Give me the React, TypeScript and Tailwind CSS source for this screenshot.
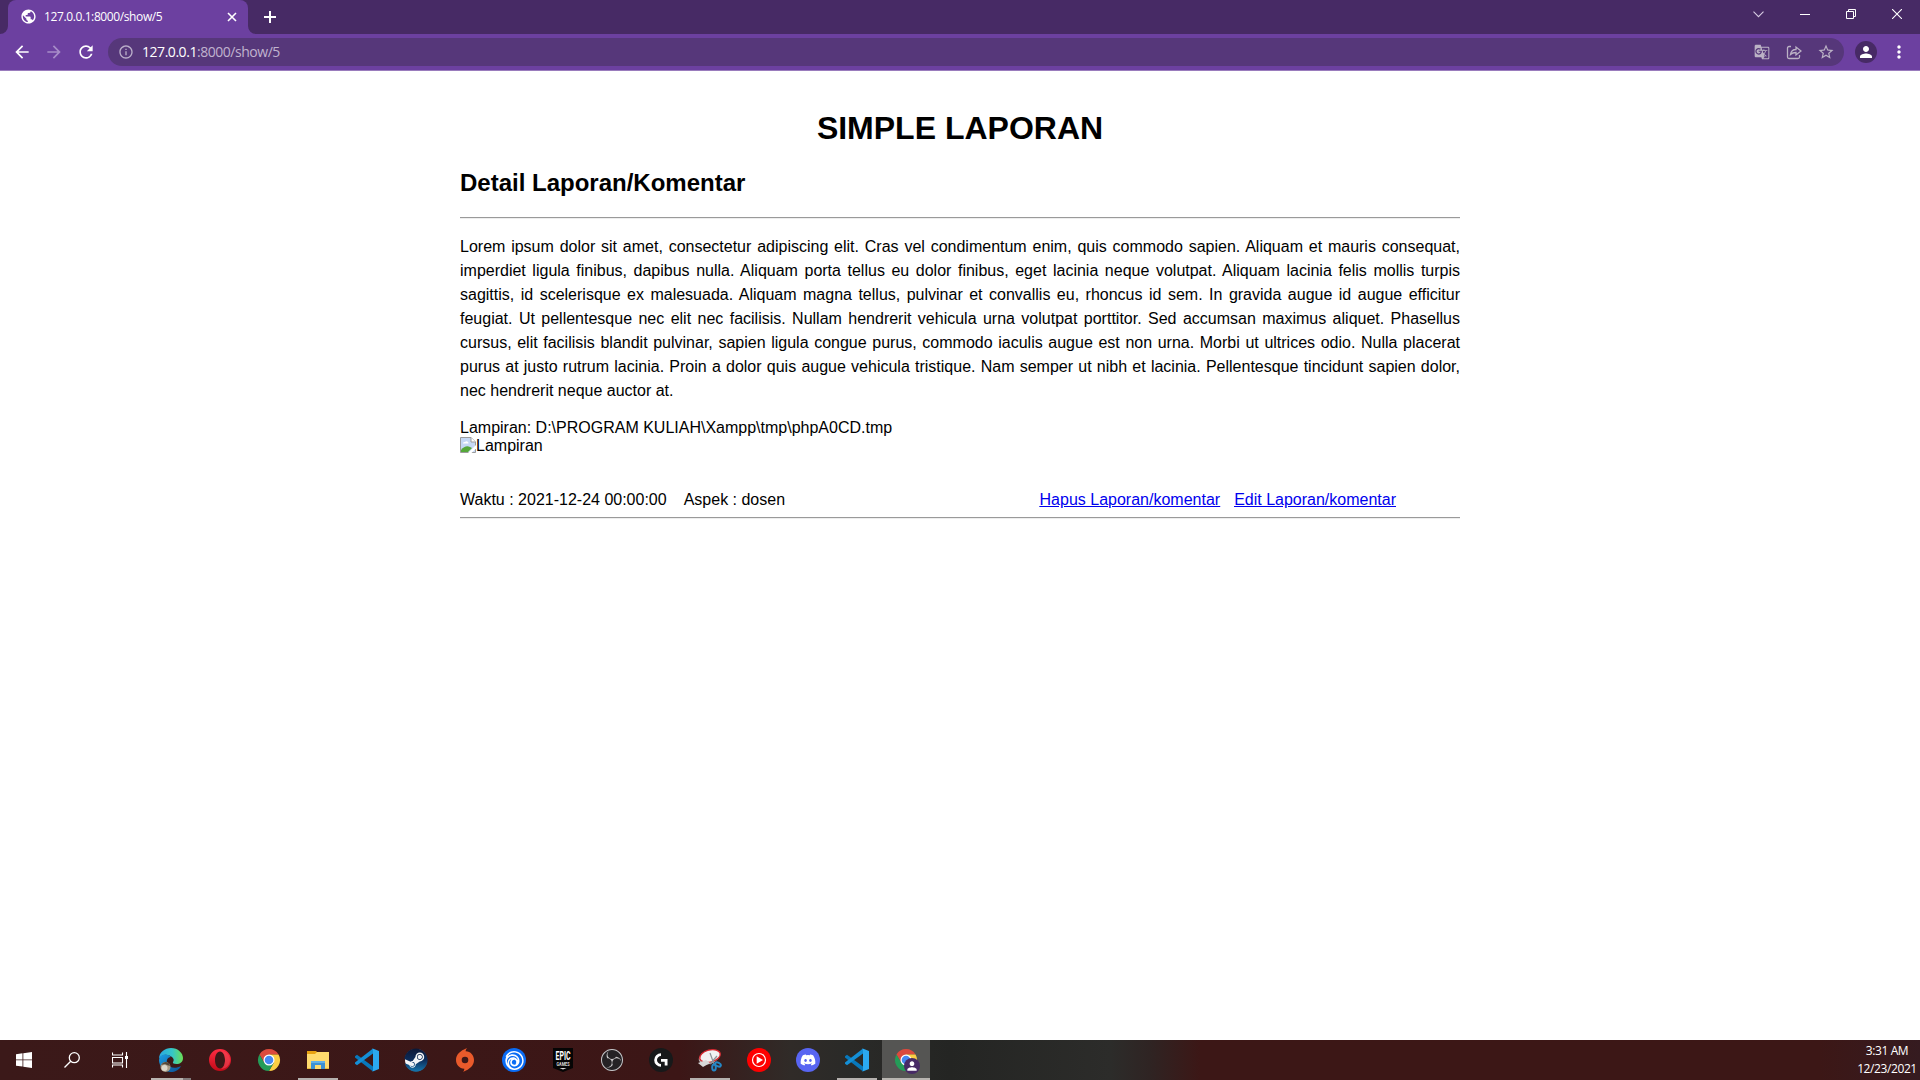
import React from "react";
import { MdArrowBack, MdArrowForward, MdRefresh, MdInfoOutline, MdStarBorder, MdPerson, MdMoreVert, MdPublic, MdGTranslate } from "react-icons/md";
import { FaDiscord, FaSteam } from "react-icons/fa";
import { SiUbisoft, SiObsstudio } from "react-icons/si";

function TabStrip() {
  return (
    <div className="flex h-[34px] bg-[#472a65] pl-2 text-white">
      <div className="relative flex h-[34px] w-[240px] items-center rounded-t-lg bg-[#6c40a0] pl-3 pr-[11px] pb-px">
        <svg className="absolute -left-2 bottom-0" width="8" height="8"><path d="M8 0v8H0a8 8 0 0 0 8-8z" fill="#6c40a0" /></svg>
        <svg className="absolute -right-2 bottom-0" width="8" height="8"><path d="M0 0v8h8a8 8 0 0 1-8-8z" fill="#6c40a0" /></svg>
        <MdPublic className="size-[17px] shrink-0" />
        <span className="ml-[7px] grow whitespace-nowrap text-[12px] leading-4 tracking-[-0.39px]">127.0.0.1:8000/show/5</span>
        <svg width="10" height="10" viewBox="0 0 10 10" stroke="#fff" strokeWidth="1.6"><path d="M1 1l8 8M9 1l-8 8" /></svg>
      </div>
      <svg className="ml-4 mt-[11px]" width="12" height="12" stroke="#fff" strokeWidth="2"><path d="M6 0v12M0 6h12" /></svg>
      <div className="ml-auto flex h-7 *:flex *:w-[46px] *:items-center *:justify-center">
        <div className="pr-px"><svg width="11" height="7" fill="none" stroke="#d6cbe2" strokeWidth="1.1"><path d="M.5.7l5 5 5-5" /></svg></div>
        <div className="pt-px"><svg width="10" height="1"><path d="M0 0h10v1H0z" fill="#fff" /></svg></div>
        <div><svg width="10" height="10" fill="none" stroke="#fff"><path d="M.5 2.5h7v7h-7zM2.5 2.5v-2h7v7h-2" /></svg></div>
        <div><svg width="10" height="10" stroke="#fff" strokeWidth="1.1"><path d="M0 0l10 10M10 0L0 10" /></svg></div>
      </div>
    </div>
  );
}

function Toolbar() {
  return (
    <div className="flex h-[37px] items-center border-b border-[#9a7cbd] bg-[#6c40a0] text-white">
      <div className="flex w-[108px] shrink-0 items-center gap-3 pl-3">
        <MdArrowBack className="size-5" />
        <MdArrowForward className="size-5 text-[#a78cc8]" />
        <MdRefresh className="size-5" />
      </div>
      <div className="flex h-7 grow items-center rounded-full bg-[#56377a] pl-[10px] pr-[10px]">
        <MdInfoOutline className="size-4 text-[#bbafca]" />
        <span className="ml-2 text-[14px] leading-5 tracking-[-0.46px] text-[#c0b3cf]"><span className="text-white">127.0.0.1</span>:8000/show/5</span>
        <div className="ml-auto flex items-center gap-4 text-[#bbb2c5]">
          <MdGTranslate className="size-4" />
          <svg width="16" height="16" viewBox="0 0 16 16" fill="none" stroke="currentColor" strokeWidth="1.3"><path d="M5 2.5H3a1.5 1.5 0 0 0-1.5 1.5v9A1.500 1.500 0 0 0 3 14.500h9a1.500 1.500 0 0 0 1.500-1.500v-2" /><path d="M4.500 10.500c.5-3.500 2.500-5 5.500-5V3l5 4-5 4V8.500c-2.500 0-4 .5-5.500 2z" /></svg>
          <MdStarBorder className="size-[18px] -mx-px" />
        </div>
      </div>
      <div className="ml-[11px] flex size-[22px] items-center justify-center rounded-full bg-[#472a65]"><MdPerson className="size-[18px]" /></div>
      <MdMoreVert className="ml-3 mr-[11px] size-5" />
    </div>
  );
}

function BrokenImage() {
  return (
    <svg width="16" height="16" viewBox="0 0 16 16">
      <path d="M.5.500h10.500l4.500 4.500v10.500H.500z" fill="#c5d8f5" stroke="#9b9b9b" />
      <path d="M11 .500V5h4.500" fill="#fff" stroke="#9b9b9b" />
      <path d="M3 6.500a1.500 1.500 0 0 1 2-1.500 2 2 0 0 1 3.500 1.500z" fill="#fff" />
      <path d="M1 15v-2c3-3.500 6-4.500 9-3l2 1-4 4z" fill="#55a83a" />
      <path d="M16 8L8 16h3.500L16 11.500z" fill="#fff" />
    </svg>
  );
}

function Page() {
  return (
    <main className="grow bg-white font-['Liberation_Sans',sans-serif] text-base text-black">
      <div className="mx-auto w-[1000px] pt-[39px]">
        <h1 className="text-center text-[32px] leading-[37px] font-bold">SIMPLE LAPORAN</h1>
        <h2 className="mt-[22px] text-[24px] leading-7 font-bold">Detail Laporan/Komentar</h2>
        <hr className="mt-5 h-0.5 border-0 border-t border-[#9a9a9a] bg-[#eee]" />
        <p className="mt-4 text-justify leading-6">
          Lorem ipsum dolor sit amet, consectetur adipiscing elit. Cras vel condimentum enim, quis commodo sapien. Aliquam et mauris consequat, imperdiet ligula finibus, dapibus nulla. Aliquam porta tellus eu dolor finibus, eget lacinia neque volutpat. Aliquam lacinia felis mollis turpis sagittis, id scelerisque ex malesuada. Aliquam magna tellus, pulvinar et convallis eu, rhoncus id sem. In gravida augue id augue efficitur feugiat. Ut pellentesque nec elit nec facilisis. Nullam hendrerit vehicula urna volutpat porttitor. Sed accumsan maximus aliquet. Phasellus cursus, elit facilisis blandit pulvinar, sapien ligula congue purus, commodo iaculis augue est non urna. Morbi ut ultrices odio. Nulla placerat purus at justo rutrum lacinia. Proin a dolor quis augue vehicula tristique. Nam semper ut nibh et lacinia. Pellentesque tincidunt sapien dolor, nec hendrerit neque auctor at.
        </p>
        <div className="mt-4 leading-[18px]">Lampiran: D:\PROGRAM KULIAH\Xampp\tmp\phpA0CD.tmp</div>
        <div className="flex items-start leading-[18px]"><BrokenImage />Lampiran</div>
        <div className="mt-9 flex leading-[18px]">
          <span>Waktu : 2021-12-24 00:00:00</span>
          <span className="ml-[17px]">Aspek : dosen</span>
          <div className="mr-16 ml-auto flex gap-[14px] text-[#0000ee] underline">
            <a href="#hapus">Hapus Laporan/komentar</a>
            <a href="#edit">Edit Laporan/komentar</a>
          </div>
        </div>
        <hr className="mt-2 h-0.5 border-0 border-t border-[#9a9a9a] bg-[#eee]" />
      </div>
    </main>
  );
}

function Edge() {
  return (
    <svg width="24" height="24" viewBox="0 0 24 24">
      <defs>
        <linearGradient id="edgeTop"><stop offset="0" stopColor="#2aa7e0" /><stop offset=".55" stopColor="#35c6c8" /><stop offset="1" stopColor="#6bdf55" /></linearGradient>
        <linearGradient id="edgeLow" x2="1" y2="1"><stop offset="0" stopColor="#1b9de2" /><stop offset="1" stopColor="#0b4f94" /></linearGradient>
      </defs>
      <path d="M0 11C0 4 6 0 12 0c7 0 12 5 12 10 0 4-3 6-6.500 6-3 0-4-1-3.500-2 1-1.500 1-3-.5-4.500C9 5 2 6 0 11z" fill="url(#edgeTop)" />
      <path d="M0 12c1-6 8-7 12-3-4 0-5 4-3.500 7 2 4 8 5 13.500 2-2 4-6 6-10 6C5 24 0 18 0 12z" fill="url(#edgeLow)" />
      <circle cx="6.500" cy="19" r="5" fill="#a89c88" /><circle cx="5.500" cy="20" r="3" fill="#ddd7ca" />
      <path d="M2 17q3-5 8-2l1 3-3-1-2-1z" fill="#55483a" />
    </svg>
  );
}

function Opera() {
  return (
    <svg width="24" height="24" viewBox="0 0 24 24">
      <defs><linearGradient id="opera" x2="0" y2="1"><stop stopColor="#ff2c42" /><stop offset="1" stopColor="#c20a18" /></linearGradient></defs>
      <path fillRule="evenodd" d="M12 1a11 11 0 1 0 0 22 11 11 0 0 0 0-22zm0 2.500c3 0 5 4 5 8.500s-2 8.500-5 8.500S7 16.500 7 12s2-8.500 5-8.500z" fill="url(#opera)" />
      <path d="M13 3c5 0 9 4 9 9s-4 9-9 9c2.500-1 4-4.700 4-9s-1.500-8-4-9z" fill="#ef4856" opacity=".6" />
    </svg>
  );
}

function Chrome() {
  return (
    <svg width="24" height="24" viewBox="0 0 24 24">
      <path d="M2.470 6.500A11 11 0 0 1 21.530 6.500H12l-4.760 8.250z" fill="#dc4a3d" />
      <path d="M21.530 6.500A11 11 0 0 1 12 23l4.760-8.250L12 6.500z" fill="#fbce43" />
      <path d="M2.470 6.500A11 11 0 0 0 12 23l4.760-8.250H7.240z" fill="#249c58" />
      <circle cx="12" cy="12" r="5.500" fill="#fff" /><circle cx="12" cy="12" r="4.300" fill="#4688f1" />
    </svg>
  );
}

function Explorer() {
  return (
    <svg width="24" height="24" viewBox="0 0 24 24">
      <path d="M1 3h9l2 2h11v4H1z" fill="#e8a211" />
      <path d="M1 6h8l2-2h12v17H1z" fill="#ffdb6e" />
      <path d="M5 21v-6.500L7 13h10l2 1.500V21h-4v-4H9v4z" fill="#3d91d4" />
      <path d="M5 13h14v2H5z" fill="#62b2e8" /><path d="M1 20h4v1H1zM19 20h4v1h-4z" fill="#e8b83d" />
    </svg>
  );
}

function VSCode() {
  return (
    <svg width="24" height="24" viewBox="0 0 24 24">
      <path d="M0 8.300l2-1.600L18 18.500v5L0 9.500z" fill="#0878bb" />
      <path d="M0 15.700l2 1.600L18 5.500v-5L0 14.500z" fill="#148fd6" />
      <path d="M17 .2L24 3v18l-7 2.800c.7-.3 1-1 1-1.800V2c0-.8-.3-1.500-1-1.800z" fill="#2ba9f1" />
    </svg>
  );
}

function Steam() {
  return (
    <div className="relative size-[22px] rounded-full bg-[#f2f5f7]">
      <svg className="absolute" width="0" height="0"><defs><linearGradient id="steam" x2="0" y2="1"><stop stopColor="#0b1736" /><stop offset=".5" stopColor="#0c2c5a" /><stop offset="1" stopColor="#1577ae" /></linearGradient></defs></svg>
      <FaSteam className="absolute -inset-px size-6 fill-[url(#steam)]" />
    </div>
  );
}

function Origin() {
  return (
    <svg width="24" height="24" viewBox="0 0 24 24">
      <path fillRule="evenodd" d="M14 0c-1 1.200-1.400 2.400-1.300 3.300 5 .2 8.300 4 8.300 8.700 0 5.500-4 9-11 12 1-1.200 1.400-2.400 1.300-3.300C6.300 20.500 3 16.700 3 12 3 6.500 7 3 14 0zM12 8.700a3.300 3.300 0 1 0 0 6.600 3.300 3.300 0 0 0 0-6.600z" fill="#e95a2b" />
    </svg>
  );
}

function Snip() {
  return (
    <svg width="24" height="24" viewBox="0 0 24 24">
      <ellipse cx="11" cy="9.500" rx="10.500" ry="6.500" transform="rotate(-18 11 9.500)" fill="#b9b9b9" />
      <ellipse cx="12" cy="8" rx="10.500" ry="6" transform="rotate(-14 12 8)" fill="#f1f1f1" stroke="#d9272f" strokeWidth="1.300" />
      <path d="M0 15l8-3 4 3-7 4z" fill="#d8d8d8" />
      <path d="M12 5l4 11M19 8l-7 8" stroke="#8c9297" strokeWidth="1.200" />
      <g fill="none" stroke="#2487c5" strokeWidth="2"><ellipse cx="16" cy="19.500" rx="1.800" ry="3" /><ellipse cx="20" cy="16.500" rx="3" ry="1.800" transform="rotate(25 20 16.500)" /></g>
    </svg>
  );
}

function Epic() {
  return (
    <svg className="overflow-visible" width="22" height="24" viewBox="0 0 22 24">
      <path d="M1 0h20v20l-10 4L1 20z" fill="#050505" />
      <text x="11" y="11.500" textAnchor="middle" textLength="15" lengthAdjust="spacingAndGlyphs" fontFamily="Roboto, sans-serif" fontWeight="700" fontSize="12" fill="#fff">EPIC</text>
      <text x="11" y="17.500" textAnchor="middle" textLength="13" lengthAdjust="spacingAndGlyphs" fontFamily="Roboto, sans-serif" fontWeight="700" fontSize="5" fill="#ddd">GAMES</text>
      <path d="M7.500 20h7L11 21.500z" fill="#ddd" />
    </svg>
  );
}

const apps: { name: string; icon: React.ReactNode; state?: "open" | "stacked" | "active" }[] = [
  { name: "Edge", icon: <Edge />, state: "stacked" },
  { name: "Opera", icon: <Opera /> },
  { name: "Chrome", icon: <Chrome /> },
  { name: "Explorer", icon: <Explorer />, state: "open" },
  { name: "Code", icon: <VSCode /> },
  { name: "Steam", icon: <Steam /> },
  { name: "Origin", icon: <Origin /> },
  { name: "Ubisoft", icon: <div className="flex size-6 items-center justify-center rounded-full bg-[#0a6cf5] text-white"><SiUbisoft className="size-[19px]" /></div> },
  { name: "Epic", icon: <Epic /> },
  { name: "OBS", icon: <div className="flex size-[22px] items-center justify-center rounded-full bg-[#242225] text-[#c9c7c9]"><SiObsstudio className="size-[22px]" /></div> },
  { name: "G Hub", icon: (
    <svg width="24" height="24" viewBox="0 0 24 24"><circle cx="12" cy="12" r="12" fill="#17191a" />
      <path d="M12 6.600a5.400 5.400 0 1 0 0 10.800" fill="none" stroke="#fff" strokeWidth="2.800" />
      <path d="M12 11h6.500v6.400h-2.800v-3.600H12z" fill="#fff" /></svg>) },
  { name: "Snip", icon: <Snip />, state: "open" },
  { name: "Music", icon: (
    <svg width="24" height="24" viewBox="0 0 24 24"><circle cx="12" cy="12" r="12" fill="#fe0000" /><circle cx="12" cy="12" r="6.500" fill="none" stroke="#fff" strokeWidth="1.200" /><path d="M9.700 8.300l6.300 3.700-6.300 3.700z" fill="#fff" /></svg>) },
  { name: "Discord", icon: <div className="flex size-6 items-center justify-center rounded-full bg-[#5865f2] text-white"><FaDiscord className="size-4" /></div> },
  { name: "Code window", icon: <VSCode />, state: "open" },
  { name: "Chrome window", icon: (
    <div className="relative size-6"><Chrome /><div className="absolute top-[10px] left-[10px] flex size-4 items-center justify-center rounded-full bg-[#472a65] text-white"><MdPerson className="size-[14px]" /></div></div>), state: "active" },
];

const underline = {
  active: "inset-x-0 bg-[#b9b6b1]",
  stacked: "left-1 w-10 border-r-8 border-[#827b7b] bg-[#b9b4b0]",
  open: "left-1 w-10 bg-[#b5b1ae]",
};

function Taskbar() {
  return (
    <footer className="flex h-10 shrink-0 bg-[linear-gradient(90deg,#3b1919_0px,#3c1616_680px,#302b28_790px,#2a2a28_850px,#242523_950px,#2c2c2a_1110px,#2f2423_1150px,#3c1716_1200px,#3c1716_1820px,#351b20_1920px)] text-white">
      <div className="flex w-[147px] *:flex *:w-12 *:items-center *:justify-center">
        <div><svg width="16" height="16" fill="#fff"><path d="M0 2.200L6.500 1.300v6.200H0zM7.300 1.200L16 0v7.500H7.300zM0 8.300h6.500v6.300L0 13.700zM7.300 8.300H16V16l-8.700-1.200z" /></svg></div>
        <div><svg width="16" height="16" fill="none" stroke="#fff" strokeWidth="1.300"><circle cx="10.300" cy="5.700" r="5" /><path d="M6.700 9.300L.5 15.500" /></svg></div>
        <div><svg width="17" height="16" fill="none" stroke="#fff" strokeWidth="1.100"><path d="M.5.500V3h10V.5M.5 15.500V13h10v2.500M.5 5.500h10v5.500H.5zM14.500 0v16" /><path d="M13 4h3v3h-3z" fill="#fff" stroke="none" /></svg></div>
      </div>
      <div className="flex gap-px">
        {apps.map((a) => (
          <div key={a.name} className={"relative flex w-12 items-center justify-center " + (a.state === "active" ? "bg-[#555553]" : "")}>
            {a.icon}
            {a.state && <div className={"absolute bottom-0 h-0.5 " + underline[a.state]} />}
          </div>
        ))}
      </div>
      <div className="ml-auto w-[64px] pr-[2px] pt-[2px] text-center font-['Open_Sans',sans-serif] text-[12px] leading-[18px] tracking-[-0.4px] whitespace-nowrap">
        <div>3:31 AM</div>
        <div>12/23/2021</div>
      </div>
    </footer>
  );
}

export default function App() {
  return (
    <div className="flex h-screen w-full flex-col overflow-hidden bg-white">
      <header className="shrink-0 font-['Open_Sans',sans-serif]">
        <TabStrip />
        <Toolbar />
      </header>
      <Page />
      <Taskbar />
    </div>
  );
}
